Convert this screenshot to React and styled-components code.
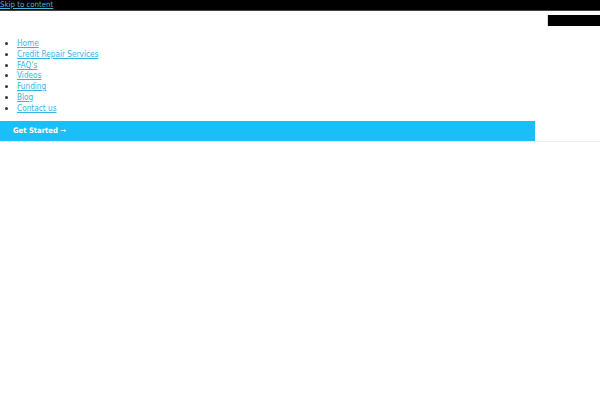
import React from 'react'
import styled, { createGlobalStyle } from 'styled-components'

const GlobalStyle = createGlobalStyle`
  html, body {
    margin: 0;
    padding: 0;
    background: #fff;
    font-family: "DejaVu Sans Condensed", "DejaVu Sans", sans-serif;
  }
`

const TopBar = styled.div`
  height: 10px;
  background: #000;
  border-bottom: 1px solid #444;
  font-size: 7.8px;
  line-height: 10px;
`

const SkipLink = styled.a`
  color: #4fb8d8;
  text-decoration: underline;
`

const Header = styled.header`
  display: flex;
  justify-content: space-between;
  border-bottom: 1px solid #eee;
`

const Left = styled.div`
  display: flex;
  flex-direction: column;
  width: 535px;
`

const NavList = styled.ul`
  margin: 27px 0 7px;
  padding-left: 17px;
  font-size: 8.2px;
  line-height: 10.8px;

  li::marker {
    color: #333;
  }
`

const NavLink = styled.a`
  color: #33b5e5;
  text-decoration: underline;
`

const CtaButton = styled.a`
  display: flex;
  align-items: center;
  height: 20px;
  padding-left: 13px;
  background: #1bbff7;
  color: #fff;
  font-size: 7.6px;
  font-weight: bold;
  text-decoration: none;
`

const Right = styled.div`
  display: flex;
  flex-direction: column;
  align-items: flex-end;
  padding-top: 4px;
`

const BlackBox = styled.div`
  width: 52px;
  height: 11px;
  background: #000;
  border-left: 1px solid #ddd;
`

const links = ['Home', 'Credit Repair Services', 'FAQ’s', 'Videos', 'Funding', 'Blog', 'Contact us']

export default function App() {
  return (
    <>
      <GlobalStyle />
      <TopBar>
        <SkipLink href="#content">Skip to content</SkipLink>
      </TopBar>
      <Header>
        <Left>
          <NavList>
            {links.map((l) => (
              <li key={l}>
                <NavLink href="#">{l}</NavLink>
              </li>
            ))}
          </NavList>
          <CtaButton href="#">Get Started ➞</CtaButton>
        </Left>
        <Right>
          <BlackBox />
        </Right>
      </Header>
    </>
  )
}
